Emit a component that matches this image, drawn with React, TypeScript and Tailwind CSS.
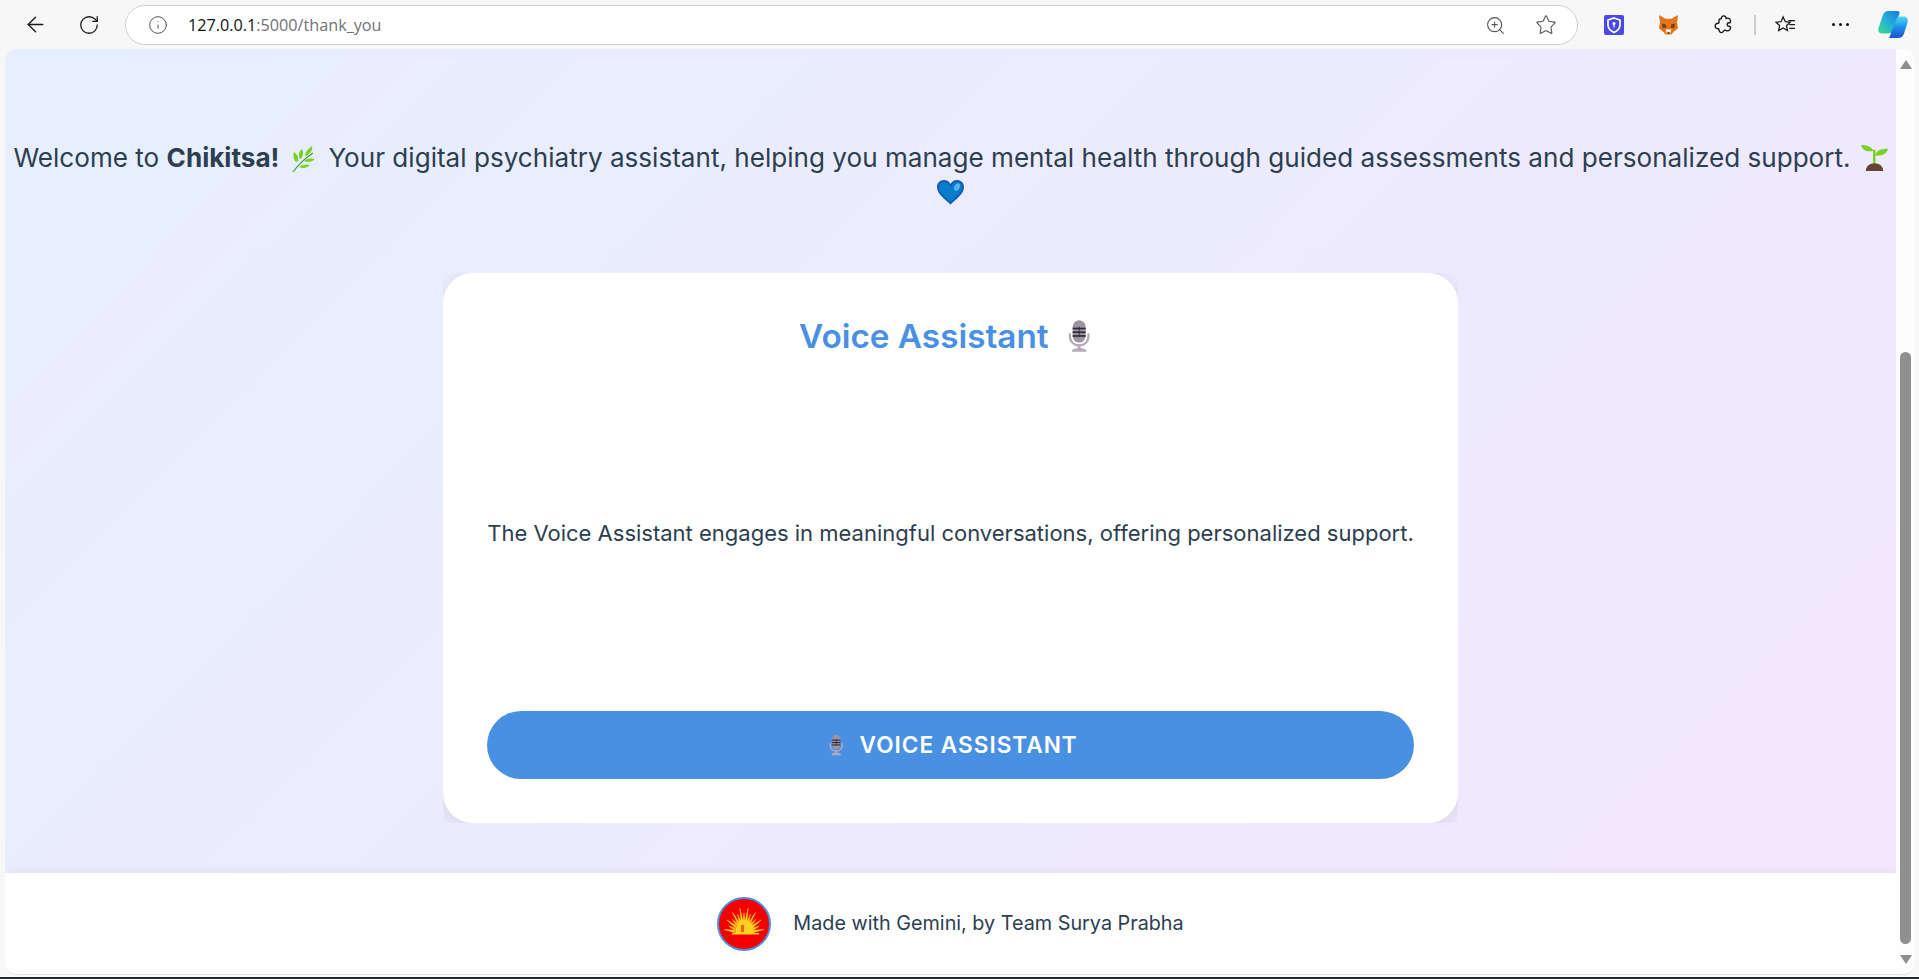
import { ArrowLeft, Info, RotateCw, Star, ZoomIn } from 'lucide-react'

const Herb = () => (
  <svg width="27" height="28" viewBox="2 0 25 28" className="inline-block align-[-6px] ml-[11px] mr-[11px]">
    <path d="M4 27C9 20 15 14 24 8" stroke="#3f9a1c" strokeWidth="1.100" fill="none" />
    <path d="M7 17c-3-3-3-7-2-10 3 2 5 6 4 9z" fill="#77d224" />
    <path d="M11 14c-2-4-1-8 2-10 2 3 1 7-1 10z" fill="#77d224" />
    <path d="M16 11c0-4 3-7 7-10 1 4-2 8-6 10z" fill="#77d224" />
    <path d="M10 22c4-3 8-3 11-2-3 3-7 4-11 2z" fill="#77d224" />
    <path d="M15 16c3-3 7-3 11-2-3 3-7 4-11 2z" fill="#77d224" />
  </svg>
)

const Seedling = () => (
  <svg width="27" height="27" viewBox="0 0 28 28" className="inline-block align-[-4px] ml-[10px]">
    <path d="M13 7C11 3 6 1 0 1c1 5 6 8 13 6z" fill="#77d224" />
    <path d="M14.500 12c1-5 6-7 13.500-7-1 5-6 8-13.500 7z" fill="#77d224" />
    <rect x="12.500" y="6" width="2.500" height="15" fill="#77d224" />
    <path d="M5 28c0-5 4-8 9-8s9 3 9 8z" fill="#664235" />
  </svg>
)

const BlueHeart = () => (
  <svg width="29" height="26" viewBox="0 0 29 26" className="inline-block relative -top-[2px]">
    <path d="M14.500 25.500C9 20 1 15 1 8c0-4 3-7 7-7 3 0 5 1.500 6.500 4C16 2.500 18 1 21 1c4 0 7 3 7 7 0 7-8 12-13.500 17.500z" fill="#0a5fb0" />
    <path d="M14.500 23C10 18.500 3 14 3 8c0-3 2.400-5 5-5 3 0 5 2 6.500 5C16 5 18 3 21 3c2.600 0 5 2 5 5 0 6-7 10.500-11.500 15z" fill="#0a7ccc" />
    <ellipse cx="21" cy="8" rx="2.600" ry="4" transform="rotate(30 21 8)" fill="#58b4f0" />
  </svg>
)

const Mic = ({ size = 31 }: { size?: number }) => (
  <svg width={size * 0.72} height={size * 1.1} viewBox="0 0 24 36" className="block">
    <path d="M2 15v3c0 6 4 10 10 10s10-4 10-10v-3" fill="none" stroke="#b6aabd" strokeWidth="2.400" />
    <rect x="5" y="1" width="14" height="24" rx="7" fill="#9c94a3" />
    <rect x="5" y="9" width="14" height="1.800" fill="#2b2b33" />
    <rect x="5" y="13" width="14" height="1.800" fill="#2b2b33" />
    <rect x="5" y="17" width="14" height="1.800" fill="#2b2b33" />
    <rect x="11.500" y="8" width="1" height="11" fill="#2b2b33" />
    <rect x="10.500" y="27" width="3" height="5" fill="#b6aabd" />
    <path d="M4 35c0-3 3-4 8-4s8 1 8 4z" fill="#b6aabd" />
  </svg>
)

// rays fan out from the sun's centre, long and short in turn
const rays = Array.from({ length: 15 }, (_, i) => {
  const a = ((-172 + (i * 164) / 14) * Math.PI) / 180
  const end = i % 2 === 0 ? 25 : 20
  const side = 0.09
  const p = (r: number, t: number) => `${(27 + r * 0.8 * Math.cos(t)).toFixed(1)} ${(36 + r * Math.sin(t)).toFixed(1)}`
  return `M${p(12, a - side)}L${p(end, a)}L${p(12, a + side)}z`
})

const SunLogo = () => (
  <svg width="54" height="54" viewBox="0 0 54 54">
    <circle cx="27" cy="27" r="26" fill="#f40000" stroke="#4a90e2" strokeWidth="2" />
    {rays.map((d) => (
      <path key={d} d={d} fill="#ffd21f" stroke="#ffd21f" strokeWidth="0.600" />
    ))}
    <path d="M18 36a9.500 13 0 0 1 19 0z" fill="#ffd21f" />
    <rect x="15" y="36" width="27" height="1.500" fill="#ffd21f" />
    <path d="M24 28h3v7h-3z" fill="#f06000" />
  </svg>
)

const BitwardenShield = () => (
  <svg width="20" height="20" viewBox="0 0 20 20">
    <rect width="20" height="20" rx="2" fill="#4b48e8" />
    <path d="M10 3l6 2v5c0 4-3 6-6 7.500C7 16 4 14 4 10V5z" fill="none" stroke="#fff" strokeWidth="1.700" />
    <circle cx="10" cy="8.500" r="1.500" fill="#fff" />
    <rect x="9.400" y="9" width="1.200" height="3.500" fill="#fff" />
  </svg>
)

const Fox = () => (
  <svg width="21" height="20" viewBox="0 0 22 21">
    <path d="M1 0l7 4h6l7-4-1 8 1 6-5 4-2 2.500H8L6 18l-5-4 1-6z" fill="#e2761b" />
    <path d="M4 9l4 1 1 3-4 1zM18 9l-4 1-1 3 4 1z" fill="#763d16" />
    <path d="M8 15h6l-1 4H9z" fill="#f5e6d8" />
    <path d="M9.500 18h3l-1.500 2z" fill="#2b1c10" />
  </svg>
)

const Copilot = () => (
  <svg width="30" height="27" viewBox="0 0 30 27">
    <defs>
      <linearGradient id="cpa" x1="0" y1="1" x2="1" y2="0">
        <stop offset="0" stopColor="#3fdc8e" />
        <stop offset="0.5" stopColor="#22b0d8" />
        <stop offset="1" stopColor="#1a78e0" />
      </linearGradient>
      <linearGradient id="cpb" x1="0.5" y1="1" x2="0.5" y2="0">
        <stop offset="0" stopColor="#1c50c8" />
        <stop offset="0.5" stopColor="#1e90e8" />
        <stop offset="1" stopColor="#50d8f0" />
      </linearGradient>
    </defs>
    <path d="M10 0h9c2 0 3 1 2.500 2.500L16 18c-1 3-3 4.500-6 4.500H4c-3 0-4.500-2.500-3.500-5.500L5 4c1-3 3-4 5-4z" fill="url(#cpa)" />
    <path d="M11 27h9c3 0 5-1.500 6-4.500l3.500-11c1-3-.5-6-3.500-6h-4c-2 0-3 1-3.500 2.500L13 22c-.5 2-1.500 4-2 5z" fill="url(#cpb)" />
  </svg>
)

const Favorites = () => (
  <svg width="21" height="20" viewBox="0 0 22 20" fill="none" stroke="#1a1a1a" strokeWidth="1.300">
    <path d="M8.500 1.500l2.300 5 5.200.6-3.900 3.500 1 5.300-4.600-2.700-4.700 2.700 1-5.300L1 7.100l5.300-.6z" />
    <path d="M14 5.500h7M15 9.500h6M15 13.500h6" />
  </svg>
)

const Extensions = () => (
  <svg width="20" height="21" viewBox="0 0 20 21" fill="none" stroke="#1a1a1a" strokeWidth="1.400" strokeLinejoin="round">
    <path d="M7.500 4.500C7 1 12.500 1 12 4.500c2.500-1 5 .5 4.500 3.500-.2 1-1.500 1-2.500 1-1 .5-1 2.500 0 3 1 0 2.300 0 2.500 1 .5 3-2 4.500-4.500 3.500-.5-.5-2-.5-2.500.5C8.500 19.500 5 19 5 16c0-1-1-1.500-2-1.500-2.500-.5-2.500-4.500 0-5 1 0 2-.5 2-1.500-.5-2.500 1-3.500 2.500-3.500z" />
  </svg>
)

const BrowserBar = () => (
  <div className="h-[49px] flex items-center bg-[#f7f7f7] shrink-0 text-[#1a1a1a]">
    <div className="w-[125px] flex items-center pl-[23px] gap-[30px]">
      <ArrowLeft size={25} strokeWidth={1.300} />
      <RotateCw size={22} strokeWidth={1.400} />
    </div>
    <div className="w-[1453px] h-[40px] mt-[1px] bg-white border border-[#cfcfcf] rounded-full flex items-center pl-[22px] pr-[20px] font-['Open_Sans',sans-serif] text-[16.200px]">
      <Info size={20} strokeWidth={1.200} className="text-[#555]" />
      <span className="ml-[20px] text-[#111]">
        127.0.0.1<span className="text-[#71717a]">:5000/thank_you</span>
      </span>
      <div className="ml-auto flex items-center gap-[29px] text-[#555]">
        <ZoomIn size={21} strokeWidth={1.200} />
        <Star size={22} strokeWidth={1.200} />
      </div>
    </div>
    <div className="flex items-center pl-[8px]">
      <div className="w-[55px] flex justify-center"><BitwardenShield /></div>
      <div className="w-[55px] flex justify-center"><Fox /></div>
      <div className="w-[55px] flex justify-center"><Extensions /></div>
      <div className="w-[2px] h-[20px] ml-[3px] bg-[#cccccc]" />
      <div className="w-[55px] ml-[2px] flex justify-center"><Favorites /></div>
      <div className="w-[55px] flex justify-center gap-[4px]">
        <div className="w-[3px] h-[3px] rounded-full bg-[#111]" />
        <div className="w-[3px] h-[3px] rounded-full bg-[#111]" />
        <div className="w-[3px] h-[3px] rounded-full bg-[#111]" />
      </div>
      <div className="w-[50px] flex justify-center"><Copilot /></div>
    </div>
  </div>
)

const Scrollbar = () => (
  <div className="w-[19px] shrink-0 bg-[#fdfdfd] flex flex-col items-center">
    <div className="mt-[11px] w-0 h-0 border-l-[6px] border-r-[6px] border-b-[9px] border-l-transparent border-r-transparent border-b-[#8f8f8f]" />
    <div className="mt-[283px] w-[11px] h-[592px] bg-[#8f8f8f] rounded-full" />
    <div className="mt-[11px] w-0 h-0 border-l-[6px] border-r-[6px] border-t-[9px] border-l-transparent border-r-transparent border-t-[#8f8f8f]" />
  </div>
)

const App = () => {
  return (
    <div className="h-[979px] w-[1919px] overflow-hidden flex flex-col bg-[#f7f7f7] font-['Inter',sans-serif]">
      <BrowserBar />

      <div className="flex-1 flex pl-[5px] pr-[4px] min-h-0">
        <div className="flex-1 flex rounded-[12px] overflow-hidden border-b border-[#e2e2e2]">
          <div className="flex-1 flex flex-col min-w-0 bg-[linear-gradient(135deg,#e6efff,#f3e7fc)]">
            {/* Welcome text */}
            <p className="pt-[92px] text-center text-[26.100px] leading-[34px] text-[#2c3e50]">
              Welcome to <strong>Chikitsa!</strong>
              <Herb />
              Your digital psychiatry assistant, helping you manage mental health through guided assessments and
              personalized support.
              <Seedling /> <BlueHeart />
            </p>

            {/* Card */}
            <div className="mt-[64px] mx-auto w-[1015px] h-[550px] overflow-hidden">
              <div className="h-full bg-white rounded-[30px] shadow-[0_4px_20px_rgba(0,0,0,0.1)] px-[44px] pt-[40px] pb-[44px] flex flex-col">
                <h2 className="flex items-center justify-center gap-[19px] pr-[12px] text-[33.300px] leading-[46px] font-semibold text-[#4a90e2]">
                  Voice Assistant
                  <Mic />
                </h2>
                <p className="flex-1 flex items-center justify-center text-[22px] text-[#2c3e50] pb-[4px] whitespace-nowrap">
                  The Voice Assistant engages in meaningful conversations, offering personalized support.
                </p>
                <button className="h-[68px] pl-[6px] rounded-full bg-[#4a90e2] text-white text-[22.600px] font-semibold tracking-[1px] flex items-center justify-center gap-[16px]">
                  <Mic size={20} />
                  VOICE ASSISTANT
                </button>
              </div>
            </div>

            <div className="h-[50px] shrink-0" />

            {/* Footer */}
            <div className="flex-1 bg-white/95 shadow-[0_-2px_10px_rgba(0,0,0,0.05)] flex items-center justify-center gap-[22px]">
              <SunLogo />
              <span className="text-[19.800px] text-[#2c3e50]">Made with Gemini, by Team Surya Prabha</span>
            </div>
          </div>
          <Scrollbar />
        </div>
      </div>

      <div className="h-[2px] shrink-0 bg-[#f7f7f7]" />
      <div className="h-[2px] shrink-0 bg-[#1f2a33]" />
    </div>
  )
}

export default App
